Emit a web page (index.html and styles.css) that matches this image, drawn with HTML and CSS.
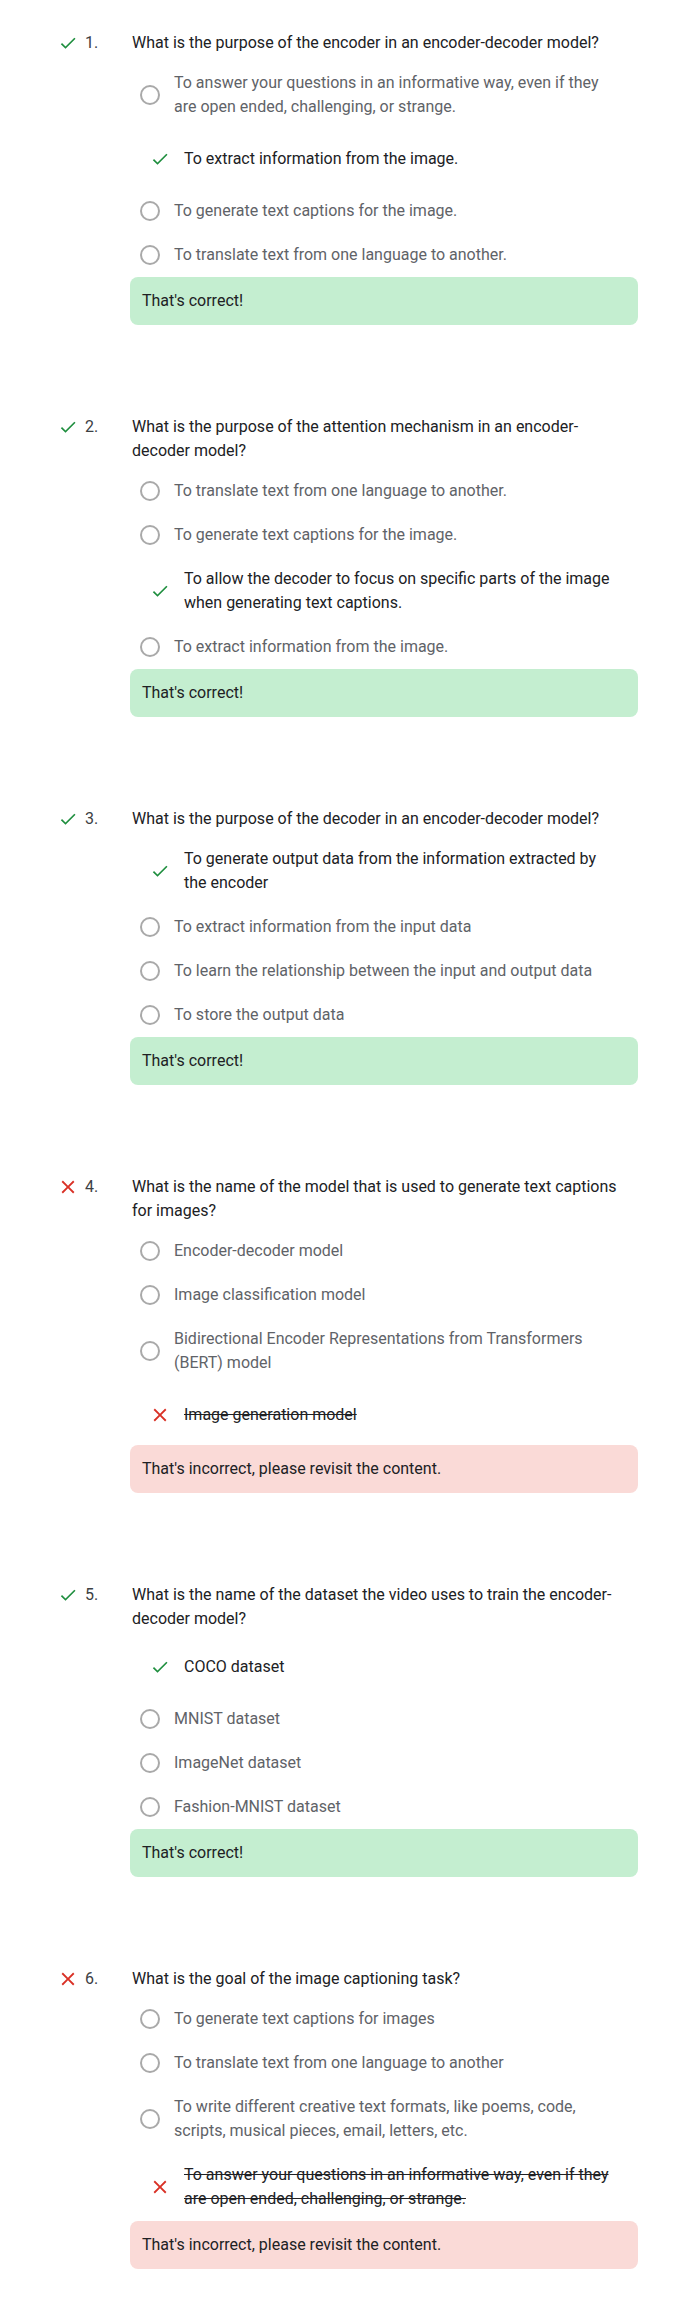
FILE: index.html
```html
<!DOCTYPE html>
<html lang="en">
<head>
<meta charset="utf-8">
<title>Quiz results</title>
<link rel="stylesheet" href="styles.css">
</head>
<body>
<main class="quiz">

  <section class="question">
    <div class="q-head">
      <div class="q-mark">
        <span class="mark"><svg class="ico-check" viewBox="0 0 24 24"><path d="M9 16.17L4.83 12l-1.42 1.41L9 19 21 7l-1.41-1.41z"/></svg></span>
        <span class="num">1.</span>
      </div>
      <div class="q-text">What is the purpose of the encoder in an encoder-decoder model?</div>
    </div>
    <div class="q-body">
      <ul class="options">
        <li class="opt"><span class="radio"></span><span class="opt-text">To answer your questions in an informative way, even if they are open ended, challenging, or strange.</span></li>
        <li class="opt chosen"><span class="opt-icon"><svg class="ico-check" viewBox="0 0 24 24"><path d="M9 16.17L4.83 12l-1.42 1.41L9 19 21 7l-1.41-1.41z"/></svg></span><span class="opt-text">To extract information from the image.</span></li>
        <li class="opt"><span class="radio"></span><span class="opt-text">To generate text captions for the image.</span></li>
        <li class="opt"><span class="radio"></span><span class="opt-text">To translate text from one language to another.</span></li>
      </ul>
      <div class="feedback ok">That's correct!</div>
    </div>
  </section>

  <section class="question">
    <div class="q-head">
      <div class="q-mark">
        <span class="mark"><svg class="ico-check" viewBox="0 0 24 24"><path d="M9 16.17L4.83 12l-1.42 1.41L9 19 21 7l-1.41-1.41z"/></svg></span>
        <span class="num">2.</span>
      </div>
      <div class="q-text">What is the purpose of the attention mechanism in an encoder-decoder model?</div>
    </div>
    <div class="q-body">
      <ul class="options">
        <li class="opt"><span class="radio"></span><span class="opt-text">To translate text from one language to another.</span></li>
        <li class="opt"><span class="radio"></span><span class="opt-text">To generate text captions for the image.</span></li>
        <li class="opt chosen"><span class="opt-icon"><svg class="ico-check" viewBox="0 0 24 24"><path d="M9 16.17L4.83 12l-1.42 1.41L9 19 21 7l-1.41-1.41z"/></svg></span><span class="opt-text">To allow the decoder to focus on specific parts of the image when generating text captions.</span></li>
        <li class="opt"><span class="radio"></span><span class="opt-text">To extract information from the image.</span></li>
      </ul>
      <div class="feedback ok">That's correct!</div>
    </div>
  </section>

  <section class="question">
    <div class="q-head">
      <div class="q-mark">
        <span class="mark"><svg class="ico-check" viewBox="0 0 24 24"><path d="M9 16.17L4.83 12l-1.42 1.41L9 19 21 7l-1.41-1.41z"/></svg></span>
        <span class="num">3.</span>
      </div>
      <div class="q-text">What is the purpose of the decoder in an encoder-decoder model?</div>
    </div>
    <div class="q-body">
      <ul class="options">
        <li class="opt chosen"><span class="opt-icon"><svg class="ico-check" viewBox="0 0 24 24"><path d="M9 16.17L4.83 12l-1.42 1.41L9 19 21 7l-1.41-1.41z"/></svg></span><span class="opt-text">To generate output data from the information extracted by the encoder</span></li>
        <li class="opt"><span class="radio"></span><span class="opt-text">To extract information from the input data</span></li>
        <li class="opt"><span class="radio"></span><span class="opt-text">To learn the relationship between the input and output data</span></li>
        <li class="opt"><span class="radio"></span><span class="opt-text">To store the output data</span></li>
      </ul>
      <div class="feedback ok">That's correct!</div>
    </div>
  </section>

  <section class="question">
    <div class="q-head">
      <div class="q-mark">
        <span class="mark"><svg class="ico-close" viewBox="0 0 24 24"><path d="M19 6.41L17.59 5 12 10.59 6.41 5 5 6.41 10.59 12 5 17.59 6.41 19 12 13.41 17.59 19 19 17.59 13.41 12z"/></svg></span>
        <span class="num">4.</span>
      </div>
      <div class="q-text">What is the name of the model that is used to generate text captions for images?</div>
    </div>
    <div class="q-body">
      <ul class="options">
        <li class="opt"><span class="radio"></span><span class="opt-text">Encoder-decoder model</span></li>
        <li class="opt"><span class="radio"></span><span class="opt-text">Image classification model</span></li>
        <li class="opt"><span class="radio"></span><span class="opt-text">Bidirectional Encoder Representations from Transformers (BERT) model</span></li>
        <li class="opt chosen wrong"><span class="opt-icon"><svg class="ico-close" viewBox="0 0 24 24"><path d="M19 6.41L17.59 5 12 10.59 6.41 5 5 6.41 10.59 12 5 17.59 6.41 19 12 13.41 17.59 19 19 17.59 13.41 12z"/></svg></span><span class="opt-text">Image generation model</span></li>
      </ul>
      <div class="feedback bad">That's incorrect, please revisit the content.</div>
    </div>
  </section>

  <section class="question">
    <div class="q-head">
      <div class="q-mark">
        <span class="mark"><svg class="ico-check" viewBox="0 0 24 24"><path d="M9 16.17L4.83 12l-1.42 1.41L9 19 21 7l-1.41-1.41z"/></svg></span>
        <span class="num">5.</span>
      </div>
      <div class="q-text">What is the name of the dataset the video uses to train the encoder-decoder model?</div>
    </div>
    <div class="q-body">
      <ul class="options">
        <li class="opt chosen"><span class="opt-icon"><svg class="ico-check" viewBox="0 0 24 24"><path d="M9 16.17L4.83 12l-1.42 1.41L9 19 21 7l-1.41-1.41z"/></svg></span><span class="opt-text">COCO dataset</span></li>
        <li class="opt"><span class="radio"></span><span class="opt-text">MNIST dataset</span></li>
        <li class="opt"><span class="radio"></span><span class="opt-text">ImageNet dataset</span></li>
        <li class="opt"><span class="radio"></span><span class="opt-text">Fashion-MNIST dataset</span></li>
      </ul>
      <div class="feedback ok">That's correct!</div>
    </div>
  </section>

  <section class="question">
    <div class="q-head">
      <div class="q-mark">
        <span class="mark"><svg class="ico-close" viewBox="0 0 24 24"><path d="M19 6.41L17.59 5 12 10.59 6.41 5 5 6.41 10.59 12 5 17.59 6.41 19 12 13.41 17.59 19 19 17.59 13.41 12z"/></svg></span>
        <span class="num">6.</span>
      </div>
      <div class="q-text">What is the goal of the image captioning task?</div>
    </div>
    <div class="q-body">
      <ul class="options">
        <li class="opt"><span class="radio"></span><span class="opt-text">To generate text captions for images</span></li>
        <li class="opt"><span class="radio"></span><span class="opt-text">To translate text from one language to another</span></li>
        <li class="opt"><span class="radio"></span><span class="opt-text">To write different creative text formats, like poems, code, scripts, musical pieces, email, letters, etc.</span></li>
        <li class="opt chosen wrong"><span class="opt-icon"><svg class="ico-close" viewBox="0 0 24 24"><path d="M19 6.41L17.59 5 12 10.59 6.41 5 5 6.41 10.59 12 5 17.59 6.41 19 12 13.41 17.59 19 19 17.59 13.41 12z"/></svg></span><span class="opt-text">To answer your questions in an informative way, even if they are open ended, challenging, or strange.</span></li>
      </ul>
      <div class="feedback bad">That's incorrect, please revisit the content.</div>
    </div>
  </section>

</main>
</body>
</html>
```
FILE: styles.css
```css
* {
  box-sizing: border-box;
}

html, body {
  margin: 0;
  padding: 0;
  background: #ffffff;
}

body {
  font-family: Roboto, "Noto Sans", "Liberation Sans", sans-serif;
  font-size: 16px;
  line-height: 24px;
  color: #202124;
}

.quiz {
  padding-top: 31px;
  padding-bottom: 48px;
}

.question + .question {
  margin-top: 90px;
}

.q-head {
  display: grid;
  grid-template-columns: 132px 498px;
  align-items: start;
}

.q-mark {
  display: flex;
  align-items: center;
  height: 24px;
  padding-left: 56px;
}

.mark {
  display: flex;
  align-items: center;
  justify-content: center;
  width: 24px;
  height: 24px;
}

.num {
  margin-left: 5px;
  color: #3c4043;
}

.q-text {
  color: #202124;
}

.ico-check {
  width: 20px;
  height: 20px;
  fill: #1e8e3e;
}

.ico-close {
  width: 22px;
  height: 22px;
  fill: #d93025;
}

.q-body {
  margin-left: 130px;
  width: 508px;
}

.options {
  list-style: none;
  margin: 6px 18px 0 0;
  padding: 0;
}

.opt {
  display: flex;
  align-items: center;
  padding: 10px 0 10px 10px;
  color: #5f6368;
}

.radio {
  flex: none;
  width: 20px;
  height: 20px;
  border: 2px solid #a9a9a9;
  border-radius: 50%;
  margin-right: 14px;
}

.opt-text {
  flex: 1;
}

.opt.chosen {
  color: #202124;
}

.opt-icon {
  flex: none;
  display: flex;
  align-items: center;
  justify-content: center;
  width: 24px;
  height: 40px;
  margin-left: 8px;
  margin-right: 12px;
}

.opt.wrong .opt-text {
  text-decoration: line-through;
}

.feedback {
  height: 48px;
  line-height: 48px;
  padding: 0 12px;
  border-radius: 8px;
  color: #202124;
}

.feedback.ok {
  background: #c4eed0;
}

.feedback.bad {
  background: #fadad7;
}
```
